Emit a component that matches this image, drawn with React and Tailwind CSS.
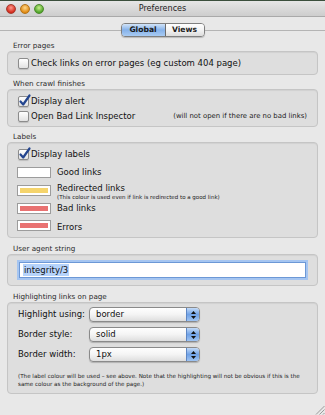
import React from 'react';

const font = { fontFamily: '"DejaVu Sans", "Noto Sans", sans-serif' };

function Check({ checked }) {
  return (
    <span className="relative w-[11px] h-[11px] shrink-0 rounded-[2px] border border-[#8c8c8c] bg-gradient-to-b from-white to-[#e2e2e2] shadow-[0_1px_1px_rgba(0,0,0,0.15)]">
      {checked && (
        <svg className="absolute -left-[1px] -top-[3px] overflow-visible" width="13" height="13" viewBox="0 0 13 13">
          <path d="M2.5 7.5 L5.2 10.5 L11.5 1.5" fill="none" stroke="#23458f" strokeWidth="2.2" strokeLinecap="round" strokeLinejoin="round" />
        </svg>
      )}
    </span>
  );
}

function Swatch({ color }) {
  return (
    <span className="w-[34px] h-[11px] shrink-0 border border-[#9c9c9c] bg-white p-[2px] flex">
      <span className={`flex-1 ${color}`} />
    </span>
  );
}

function Select({ value }) {
  return (
    <div className="w-[111px] h-[15px] flex rounded-[4px] border border-[#8a8a8a] bg-gradient-to-b from-white via-[#f4f4f4] to-[#dedede] shadow-[0_1px_1px_rgba(0,0,0,0.2)] overflow-hidden">
      <span className="flex-1 pl-[6px] text-[8.5px] leading-[13px] text-[#111]">{value}</span>
      <span className="w-[13px] border-l border-[#5d86c4] bg-gradient-to-b from-[#c4dbf7] via-[#6fa1e6] to-[#9fc4f2] flex flex-col items-center justify-center gap-[2px]">
        <svg width="5" height="3" viewBox="0 0 5 3"><path d="M0 3 L2.5 0 L5 3 Z" fill="#111" /></svg>
        <svg width="5" height="3" viewBox="0 0 5 3"><path d="M0 0 L2.5 3 L5 0 Z" fill="#111" /></svg>
      </span>
    </div>
  );
}

function Section({ title, head = 'h-[14px]', children, className }) {
  return (
    <div>
      <div className={`${head} flex items-end pl-[13px] pb-[1px] text-[7.2px] leading-[9px] text-[#2a2a2a]`}>{title}</div>
      <div className={`mx-[7px] rounded-[4px] border border-[#c5c5c5] bg-[#dedede] shadow-[inset_0_1px_1px_rgba(0,0,0,0.06)] ${className}`}>
        {children}
      </div>
    </div>
  );
}

export default function App() {
  return (
    <div className="w-[325px] h-[415px] flex flex-col bg-[#e8e8e8] overflow-hidden" style={font}>
      <div className="h-[17px] shrink-0 flex items-center border-t border-[#3b4f3c] border-b border-b-[#a9a9a9] bg-gradient-to-b from-[#e6e6e6] to-[#cdcdcd] px-[6px]">
        <div className="flex gap-[4px] w-[60px]">
          <span className="w-[10px] h-[10px] rounded-full bg-[radial-gradient(circle_at_50%_35%,#ff9a8c,#d42a1c_70%)] border border-[#a33c30]" />
          <span className="w-[10px] h-[10px] rounded-full bg-[radial-gradient(circle_at_50%_35%,#ffd98a,#e08a12_70%)] border border-[#b2731a]" />
          <span className="w-[10px] h-[10px] rounded-full bg-[radial-gradient(circle_at_50%_35%,#c8f08a,#4ea42a_70%)] border border-[#4e8a2c]" />
        </div>
        <div className="flex-1 text-center text-[8.1px] text-[#222] pr-[60px]">Preferences</div>
      </div>

      <div className="h-[20px] shrink-0 flex items-end">
        <div className="flex-1 h-[7px] border-t border-[#b4b4b4]" />
        <div className="flex h-[14px] rounded-[4px] border border-[#7f7f7f] overflow-hidden shadow-[0_1px_1px_rgba(0,0,0,0.2)]">
          <span className="w-[44px] flex items-center justify-center text-[7.6px] font-bold text-[#1b1b1b] bg-gradient-to-b from-[#d2e4f8] via-[#86b2ea] to-[#a8cbf3] border-r border-[#6b6b6b]">Global</span>
          <span className="w-[38px] flex items-center justify-center text-[7.6px] font-bold text-[#1b1b1b] bg-gradient-to-b from-white via-[#f3f3f3] to-[#dcdcdc]">Views</span>
        </div>
        <div className="flex-1 h-[7px] border-t border-[#b4b4b4]" />
      </div>

      <Section title="Error pages" className="h-[24px] flex items-center pl-[10px] gap-[2px]">
        <Check />
        <span className="text-[8.5px] text-[#111]">Check links on error pages (eg custom 404 page)</span>
      </Section>

      <Section title="When crawl finishes" className="h-[38px] pt-[4px] pl-[10px] pr-[10px]">
        <div className="h-[15px] flex items-center gap-[2px]">
          <Check checked />
          <span className="text-[8.5px] text-[#111]">Display alert</span>
        </div>
        <div className="h-[15px] flex items-center gap-[2px]">
          <Check />
          <span className="text-[8.5px] text-[#111]">Open Bad Link Inspector</span>
          <span className="ml-auto text-[6.9px] text-[#222]">(will not open if there are no bad links)</span>
        </div>
      </Section>

      <Section title="Labels" head="h-[15px]" className="h-[96px] pt-[4px] pl-[9px]">
        <div className="h-[15px] flex items-center gap-[2px] pl-[1px]">
          <Check checked />
          <span className="text-[8.5px] text-[#111]">Display labels</span>
        </div>
        <div className="h-[20px] flex items-center gap-[6px]">
          <Swatch color="bg-white" />
          <span className="text-[8.5px] text-[#111]">Good links</span>
        </div>
        <div className="h-[19px] flex items-start gap-[6px]">
          <span className="mt-[3px] flex"><Swatch color="bg-[#f5d46c]" /></span>
          <div className="flex flex-col pt-[1px]">
            <span className="text-[8.5px] leading-[11px] text-[#111]">Redirected links</span>
            <span className="text-[5.5px] leading-[7px] text-[#222]">(This colour is used even if link is redirected to a good link)</span>
          </div>
        </div>
        <div className="h-[15px] flex items-center gap-[6px]">
          <Swatch color="bg-[#e97272]" />
          <span className="text-[8.5px] text-[#111]">Bad links</span>
        </div>
        <div className="h-[18px] flex items-center gap-[6px]">
          <Swatch color="bg-[#e97272]" />
          <span className="text-[8.5px] leading-[10px] text-[#111] pt-[3px]">Errors</span>
        </div>
      </Section>

      <Section title="User agent string" head="h-[16px]" className="h-[32px] pt-[7px] px-[11px]">
        <div className="h-[16px] flex items-center border border-[#6c98d6] ring-2 ring-[#a5c5f1] bg-white pl-[3px]">
          <span className="text-[8.5px] leading-[12px] bg-[#b5d3fb] text-[#111] px-[1px]">integrity/3</span>
        </div>
      </Section>

      <Section title="Highlighting links on page" head="h-[16px]" className="h-[92px] pt-[4px] pl-[10px] pr-[8px]">
        <div className="flex flex-col gap-[5px]">
          {[
            ['Highlight using:', 'border'],
            ['Border style:', 'solid'],
            ['Border width:', '1px'],
          ].map(([label, value]) => (
            <div key={label} className="h-[15px] flex items-center">
              <span className="w-[71px] text-[8.5px] text-[#111]">{label}</span>
              <Select value={value} />
            </div>
          ))}
        </div>
        <p className="mt-[11px] text-[5.6px] leading-[7.5px] text-[#222]">
          (The label colour will be used – see above. Note that the highlighting will not be obvious if this is the same colour as the background of the page.)
        </p>
      </Section>

      <div className="flex-1 flex items-end justify-end">
        <svg width="10" height="10" viewBox="0 0 10 10">
          <path d="M9.5 1 L1 9.5 M9.5 4.5 L4.5 9.5 M9.5 8 L8 9.5" stroke="#9a9a9a" strokeWidth="1" />
        </svg>
      </div>
    </div>
  );
}
